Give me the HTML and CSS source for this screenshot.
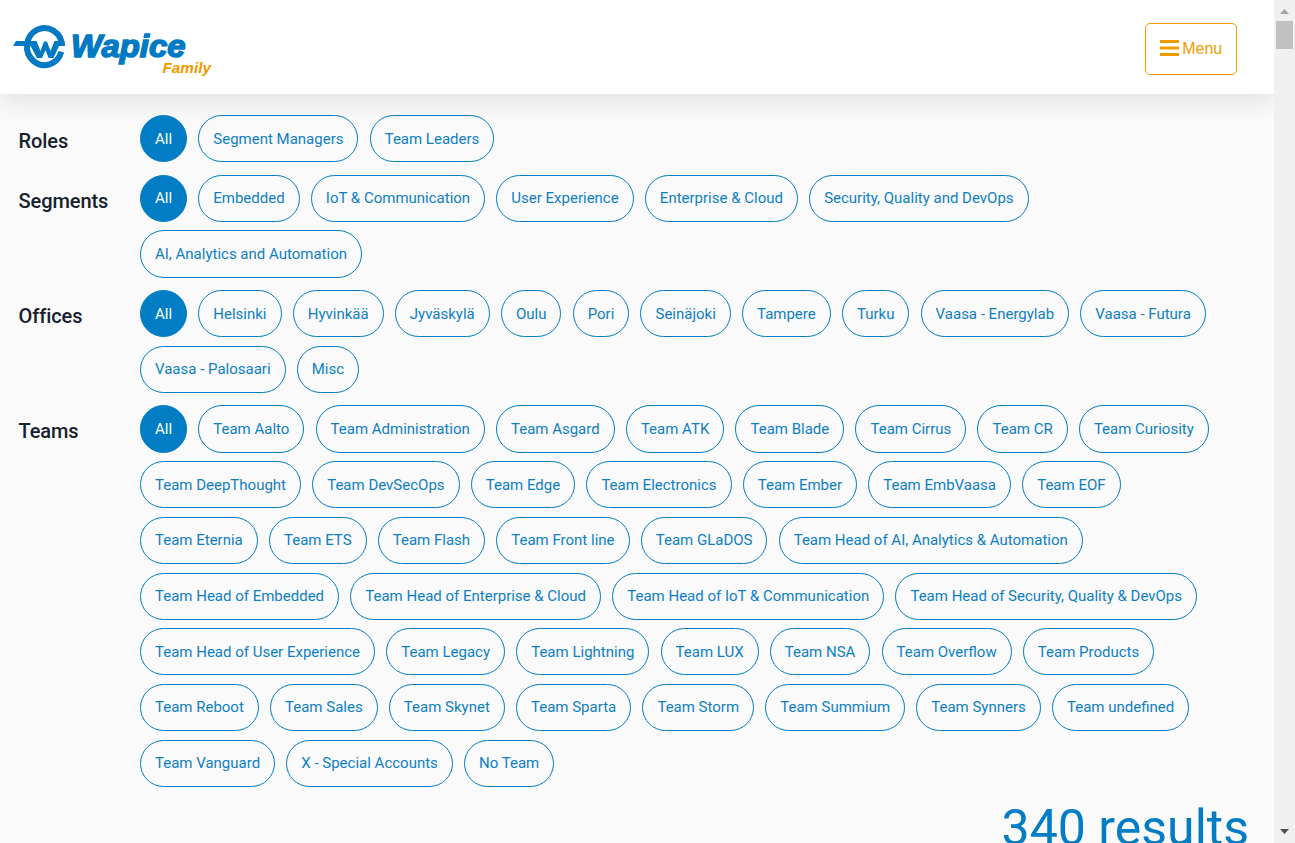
FILE: index.html
```html
<!DOCTYPE html>
<html lang="en">
<head>
<meta charset="utf-8">
<title>Wapice Family</title>
<link rel="stylesheet" href="styles.css">
</head>
<body>
<div class="page">
<header class="header">
<svg class="logo" width="206" height="60" viewBox="0 0 206 60">
<path d="M49 23A17.500 18.500 0 1 0 48.300 28.800" fill="none" stroke="#0079c4" stroke-width="6"/>
<path d="M0 23 3 18H23.500L27.500 28L31 18.500H34L37.500 28L41.500 18H51.500L52 23H46L40.500 35H35.500L32.500 27L29 35H24L17.500 23Z" fill="#0079c4"/>
<text class="logo-name" x="58" y="34" textLength="114.500" lengthAdjust="spacingAndGlyphs">Wapice</text>
<text class="logo-sub" x="149.500" y="50" textLength="48.500" lengthAdjust="spacingAndGlyphs">Family</text>
</svg>
<button class="menu"><svg width="19" height="16" viewBox="0 0 19 16"><path d="M.5 0h18q.5 0 .5.5v2q0 .5-.5.5H.5Q0 3 0 2.500v-2Q0 0 .5 0ZM.5 6.500h18q.5 0 .5.5v2q0 .5-.5.5H.5Q0 9.500 0 9V7q0-.5.5-.5ZM.5 13h18q.5 0 .5.5v2q0 .5-.5.5H.5Q0 16 0 15.500v-2Q0 13 .5 13Z" fill="#ef9b00"/></svg><span>Menu</span></button>
</header>
<main class="filters">
<section class="group"><h2>Roles</h2><div class="pills"><a class="pill active">All</a><a class="pill">Segment Managers</a><a class="pill">Team Leaders</a></div></section>
<section class="group"><h2>Segments</h2><div class="pills"><a class="pill active">All</a><a class="pill">Embedded</a><a class="pill">IoT &amp; Communication</a><a class="pill">User Experience</a><a class="pill">Enterprise &amp; Cloud</a><a class="pill">Security, Quality and DevOps</a><a class="pill">AI, Analytics and Automation</a></div></section>
<section class="group"><h2>Offices</h2><div class="pills"><a class="pill active">All</a><a class="pill">Helsinki</a><a class="pill">Hyvinkää</a><a class="pill">Jyväskylä</a><a class="pill">Oulu</a><a class="pill">Pori</a><a class="pill">Seinäjoki</a><a class="pill">Tampere</a><a class="pill">Turku</a><a class="pill">Vaasa - Energylab</a><a class="pill">Vaasa - Futura</a><a class="pill">Vaasa - Palosaari</a><a class="pill">Misc</a></div></section>
<section class="group"><h2>Teams</h2><div class="pills"><a class="pill active">All</a><a class="pill">Team Aalto</a><a class="pill">Team Administration</a><a class="pill">Team Asgard</a><a class="pill">Team ATK</a><a class="pill">Team Blade</a><a class="pill">Team Cirrus</a><a class="pill">Team CR</a><a class="pill">Team Curiosity</a><a class="pill">Team DeepThought</a><a class="pill">Team DevSecOps</a><a class="pill">Team Edge</a><a class="pill">Team Electronics</a><a class="pill">Team Ember</a><a class="pill">Team EmbVaasa</a><a class="pill">Team EOF</a><a class="pill">Team Eternia</a><a class="pill">Team ETS</a><a class="pill">Team Flash</a><a class="pill">Team Front line</a><a class="pill">Team GLaDOS</a><a class="pill">Team Head of AI, Analytics &amp; Automation</a><a class="pill">Team Head of Embedded</a><a class="pill">Team Head of Enterprise &amp; Cloud</a><a class="pill">Team Head of IoT &amp; Communication</a><a class="pill">Team Head of Security, Quality &amp; DevOps</a><a class="pill">Team Head of User Experience</a><a class="pill">Team Legacy</a><a class="pill">Team Lightning</a><a class="pill">Team LUX</a><a class="pill">Team NSA</a><a class="pill">Team Overflow</a><a class="pill">Team Products</a><a class="pill">Team Reboot</a><a class="pill">Team Sales</a><a class="pill">Team Skynet</a><a class="pill">Team Sparta</a><a class="pill">Team Storm</a><a class="pill">Team Summium</a><a class="pill">Team Synners</a><a class="pill">Team undefined</a><a class="pill">Team Vanguard</a><a class="pill">X - Special Accounts</a><a class="pill">No Team</a></div></section>
</main>
<div class="results">340 results</div>
</div>
<div class="scrollbar"><svg width="9" height="5" viewBox="0 0 9 5"><path d="M0 5 4.500 0 9 5Z" fill="#a3a3a3"/></svg><div class="thumb"></div><svg class="down" width="9" height="5" viewBox="0 0 9 5"><path d="M0 0h9L4.500 5Z" fill="#505050"/></svg></div>
</body>
</html>
```
FILE: styles.css
```css
* { box-sizing: border-box; }
body { margin: 0; height: 843px; overflow: hidden; display: flex; background: #fafafa; font-family: Roboto, sans-serif; }
.page { width: 1274px; height: 843px; overflow: hidden; flex: none; }
.header { height: 94px; background: #fff; box-shadow: 0 8px 24px rgba(0,0,0,.1); display: flex; justify-content: space-between; align-items: flex-start; padding: 23px 37px 0 13px; }
.logo { display: block; overflow: visible; }
.logo-name { font: italic bold 31px "Liberation Sans", sans-serif; fill: #0079c4; stroke: #0079c4; stroke-width: 1.5; }
.logo-sub { font: italic bold 15px "Liberation Sans", sans-serif; fill: #ef9b00; }
.menu { width: 92px; height: 52px; padding: 0 0 2px; border: 1px solid #ef9b00; border-radius: 5px; background: #fff; display: flex; align-items: center; justify-content: center; gap: 3.5px; color: #ef9b00; font: 16px "Liberation Sans", sans-serif; }
.menu span { padding-top: 1px; }
.filters { padding: 21px 0 0 18.6px; }
.group { display: flex; margin-bottom: 4px; }
.group h2 { width: 121.4px; flex: none; margin: 14px 0 0; font-size: 20px; line-height: 24px; font-weight: 500; color: #17212b; letter-spacing: -.1px; }
.pills { width: 1086px; display: flex; flex-wrap: wrap; column-gap: 11.2px; }
.pill { height: 47.3px; margin-bottom: 8.4px; padding: .6px 14px 0; border: 1px solid #007dc5; border-radius: 24px; color: #0f7fc3; font-size: 15px; line-height: 45.300px; white-space: nowrap; }
.active { background: #007dc5; color: #fff; }
.results { margin: 1px 25px 0 0; text-align: right; color: #007dc5; font-size: 50px; line-height: 58px; }
.scrollbar { width: 21px; height: 843px; flex: none; background: #f0f0f0; display: flex; flex-direction: column; align-items: center; padding: 9px 0; }
.thumb { width: 17px; height: 28px; margin-top: 7px; background: #c1c1c1; }
.down { margin-top: auto; }
```
